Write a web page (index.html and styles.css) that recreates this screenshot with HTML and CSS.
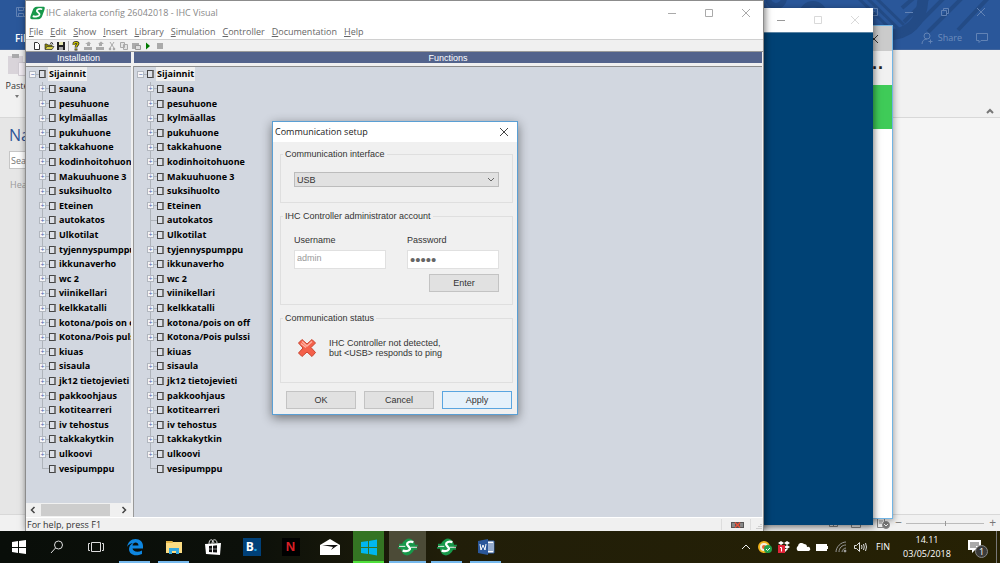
FILE: index.html
```html
<!DOCTYPE html>
<html lang="en">
<head>
<meta charset="utf-8">
<title>IHC alakerta config 26042018 - IHC Visual</title>
<link rel="stylesheet" href="styles.css">
</head>
<body>
<svg class="defs" aria-hidden="true">
  <symbol id="min" viewBox="0 0 10 10"><path d="M1 5.5h8"/></symbol>
  <symbol id="max" viewBox="0 0 10 10"><path d="M1.5 1.5h7v7h-7z"/></symbol>
  <symbol id="close" viewBox="0 0 10 10"><path d="M1 1l8 8M9 1l-8 8"/></symbol>
  <symbol id="restore" viewBox="0 0 10 10"><path d="M1.500 3.500h5v5h-5zM3.500 3.500v-2h5v5h-2"/></symbol>
  <symbol id="schneider" viewBox="0 0 22 20">
    <path d="M10 1h10c2 0 2 2 1 5l-3 8c-1 3-3 5-6 5H3c-3 0-3-2-2-5l3-8c1-3 3-5 6-5z" fill="#17984a"/>
    <path d="M18 4.500c-4-1-8 0-8 2.500 0 2 5 3 4 5.500-1 2.500-6 3.500-10 2" fill="none" stroke="#fff" stroke-width="2.600"/>
  </symbol>
  <symbol id="schneider-round" viewBox="0 0 22 20">
    <ellipse cx="11" cy="10" rx="7.500" ry="9.500" transform="rotate(20 11 10)" fill="#17984a"/>
    <path d="M1 7.500h6M0 11h7M15 8.500h7M15 12h6" stroke="#17984a" stroke-width="2"/>
    <path d="M17 4.500c-4-1-7 0-7 2.500 0 2 4 3 3 5.500-1 2-4 2.500-8 1.500" fill="none" stroke="#fff" stroke-width="2.600"/>
    <path d="M1 9.300h7M14 10.300h7" stroke="#fff" stroke-width="1"/>
  </symbol>
</svg>

<div class="desktop">
  <main class="workspace">

    <section class="word" aria-label="Word">
      <header class="word-head">
        <svg class="word-art" viewBox="0 0 300 49" aria-hidden="true">
          <circle cx="76" cy="-2" r="8" stroke-width="6"/>
          <circle cx="113" cy="15" r="11" stroke-width="6"/>
          <path d="M223-4c0 26-14 40-40 39" stroke-width="11"/>
          <path d="M156-4l44 42M165-4l38 37M174-4l30 29" stroke-width="3"/>
          <path d="M216-4l-14 12M230-4l-26 26M246-4l-36 36M264-4l-36 36M290-4l-32 34" stroke-width="4"/>
        </svg>
        <svg class="save" viewBox="0 0 10 10" aria-hidden="true"><path d="M.5.5h8l1 1v8h-9zM2.500.5v3h5v-3M2.500 9.500v-3h5v3"/></svg>
        <a class="file-tab" href="#">File</a>
        <div class="word-right">
          <div class="word-win">
            <button aria-label="Ribbon options"><svg viewBox="0 0 10 10"><path d="M.5 1.500h9v7h-9zM5 7V4M3.500 5L5 3.500 6.500 5"/></svg></button>
            <button aria-label="Minimize"><svg><use href="#min"/></svg></button>
            <button aria-label="Restore"><svg><use href="#restore"/></svg></button>
            <button aria-label="Close"><svg><use href="#close"/></svg></button>
          </div>
          <div class="word-share">
            <button class="share"><svg viewBox="0 0 12 12"><circle cx="6" cy="4" r="3"/><path d="M1 12c0-3 2-5 5-5M7.500 9.500h4M9.500 7.500v4"/></svg>Share</button>
            <button aria-label="Comments"><svg viewBox="0 0 12 12"><path d="M.5 1.500h11v7H5l-2 2v-2H.5z"/></svg></button>
          </div>
        </div>
      </header>
      <div class="ribbon">
        <button class="paste"><svg viewBox="0 0 20 24"><path fill="#d9d4da" d="M1 3h15v18H1z"/><path fill="#a9a9ab" d="M5 1h7v4H5z"/><path fill="#f4eff5" stroke="#d0cbd2" d="M11.500 9.500h9v13h-9z"/></svg>Paste<svg class="drop" viewBox="0 0 6 4"><path fill="#777" d="M1 0h4L3 3z"/></svg></button>
        <button class="collapse" aria-label="Collapse the ribbon"><svg viewBox="0 0 10 10"><path d="M2 7l3-3 3 3"/></svg></button>
      </div>
      <div class="word-body">
        <aside class="nav">
          <h2>Navigation</h2>
          <input type="text" aria-label="Search document" placeholder="Search document">
          <p>Headings</p>
        </aside>
      </div>
      <footer class="word-status">
        <svg class="views" viewBox="0 0 62 12"><path d="M1.500 2.500h8v7h-8zM5.500 2v8M23.500 1.500h9v9h-9zM25 4h6M25 6h6M49.500 1.500h7v9h-7zM51 4h4M51 6h3"/><circle cx="58" cy="8" r="3.500" fill="#777"/><path d="M56 7l2 2 2-2" stroke="#eee"/></svg>
        <span class="zoom-sign">−</span>
        <input type="range" aria-label="Zoom" value="50">
        <span class="zoom-sign">+</span>
      </footer>
    </section>

    <section class="green-window" aria-label="Background window">
      <div class="gw-title"><svg><use href="#close"/></svg></div>
      <div class="gw-dots">··</div>
      <div class="gw-band"></div>
    </section>

    <section class="blue-window" aria-label="Background application">
      <div class="bw-title">
        <svg class="strong"><use href="#min"/></svg>
        <svg><use href="#max"/></svg>
        <svg><use href="#close"/></svg>
      </div>
    </section>

    <section class="ihc" aria-label="IHC Visual">
      <header class="title">
        <svg class="logo"><use href="#schneider"/></svg>
        <h1>IHC alakerta config 26042018 - IHC Visual</h1>
        <div class="win-buttons">
          <button aria-label="Minimize"><svg><use href="#min"/></svg></button>
          <button aria-label="Maximize"><svg><use href="#max"/></svg></button>
          <button aria-label="Close"><svg><use href="#close"/></svg></button>
        </div>
      </header>
      <nav class="menu">
        <button><u>F</u>ile</button><button><u>E</u>dit</button><button><u>S</u>how</button><button><u>I</u>nsert</button><button><u>L</u>ibrary</button><button><u>S</u>imulation</button><button><u>C</u>ontroller</button><button><u>D</u>ocumentation</button><button><u>H</u>elp</button>
      </nav>
      <div class="toolbar">
        <button aria-label="New"><svg viewBox="0 0 10 10"><path d="M2.500 1.500h3l2 2v5h-5z" fill="#fff" stroke="#333"/></svg></button>
        <button aria-label="Open"><svg viewBox="0 0 10 10"><path d="M1 8V3h2l1 1h4v4z" fill="#8a8600" stroke="#333" stroke-width=".7"/><path d="M1 8.500l2-3h7l-2 3z" fill="#d8d34a" stroke="#333" stroke-width=".7"/><path d="M6 2.500l2-1 1 2" stroke="#333" fill="none"/></svg></button>
        <button aria-label="Save"><svg viewBox="0 0 10 10"><path d="M1 1h8v8H1z" fill="#222"/><path d="M3 1h4v3H3z" fill="#e6e6b0"/><path d="M3 6h4v3H3z" fill="#aaa"/></svg></button>
        <span class="sep"></span>
        <button aria-label="Help"><svg viewBox="0 0 10 10"><path d="M3 4V2.500C3 1 7 1 7 2.500S5 4 5 6.500M5 7.500v2" stroke="#222" stroke-width="2.800" fill="none"/><path d="M3 4V2.500C3 1 7 1 7 2.500S5 4 5 6M5 7.800v1" stroke="#c8c000" stroke-width="1.400" fill="none"/></svg></button>
        <button class="off" aria-label="Transfer"><svg viewBox="0 0 10 10"><path d="M1 6h8v3H1zM4 5V3H2l4-2.500L8 3H7v2z"/></svg></button>
        <button class="off" aria-label="Receive"><svg viewBox="0 0 10 10"><path d="M1 6h8v3H1zM4 5V3H3l3-2.500L9 3H7v2z"/></svg></button>
        <button class="off" aria-label="Cut"><svg viewBox="0 0 10 10"><path d="M3 1l4 6M7 1L3 7" stroke="#aaa"/><circle cx="3" cy="8" r="1.300"/><circle cx="7" cy="8" r="1.300"/></svg></button>
        <button class="off" aria-label="Copy"><svg viewBox="0 0 10 10"><path d="M1.500 1.500h4v5h-4zM4.500 3.500h4v5h-4z" fill="#e4e4e4" stroke="#aaa"/></svg></button>
        <button class="off" aria-label="Paste"><svg viewBox="0 0 10 10"><path d="M1 2h7v6H1z"/><path d="M4.500 4.500h5v4h-5z" fill="#ddd" stroke="#999"/></svg></button>
        <button aria-label="Run"><svg viewBox="0 0 10 10"><path d="M3 1.500v7L7 5z" fill="#007a00"/></svg></button>
        <button class="off" aria-label="Stop"><svg viewBox="0 0 10 10"><path d="M2 2h6v6H2z"/></svg></button>
      </div>
      <div class="panes">
        <section class="pane">
          <h2>Installation</h2>
          <div class="view">
            <ul class="tree">
              <li class="root"><button aria-label="Collapse">−</button><i></i><span>Sijainnit</span></li>
              <li><button aria-label="Expand">+</button><i></i><span>sauna</span></li>
              <li><button aria-label="Expand">+</button><i></i><span>pesuhuone</span></li>
              <li><button aria-label="Expand">+</button><i></i><span>kylmäallas</span></li>
              <li><button aria-label="Expand">+</button><i></i><span>pukuhuone</span></li>
              <li><button aria-label="Expand">+</button><i></i><span>takkahuone</span></li>
              <li><button aria-label="Expand">+</button><i></i><span>kodinhoitohuone</span></li>
              <li><button aria-label="Expand">+</button><i></i><span>Makuuhuone 3</span></li>
              <li><button aria-label="Expand">+</button><i></i><span>suksihuolto</span></li>
              <li><button aria-label="Expand">+</button><i></i><span>Eteinen</span></li>
              <li><button aria-label="Expand">+</button><i></i><span>autokatos</span></li>
              <li><button aria-label="Expand">+</button><i></i><span>Ulkotilat</span></li>
              <li><button aria-label="Expand">+</button><i></i><span>tyjennyspumppu</span></li>
              <li><button aria-label="Expand">+</button><i></i><span>ikkunaverho</span></li>
              <li><button aria-label="Expand">+</button><i></i><span>wc 2</span></li>
              <li><button aria-label="Expand">+</button><i></i><span>viinikellari</span></li>
              <li><button aria-label="Expand">+</button><i></i><span>kelkkatalli</span></li>
              <li><button aria-label="Expand">+</button><i></i><span>kotona/pois on off</span></li>
              <li><button aria-label="Expand">+</button><i></i><span>Kotona/Pois pulssi</span></li>
              <li><button aria-label="Expand">+</button><i></i><span>kiuas</span></li>
              <li><button aria-label="Expand">+</button><i></i><span>sisaula</span></li>
              <li><button aria-label="Expand">+</button><i></i><span>jk12 tietojevieti</span></li>
              <li><button aria-label="Expand">+</button><i></i><span>pakkoohjaus</span></li>
              <li><button aria-label="Expand">+</button><i></i><span>kotitearreri</span></li>
              <li><button aria-label="Expand">+</button><i></i><span>iv tehostus</span></li>
              <li><button aria-label="Expand">+</button><i></i><span>takkakytkin</span></li>
              <li><button aria-label="Expand">+</button><i></i><span>ulkoovi</span></li>
              <li class="leaf"><i></i><span>vesipumppu</span></li>
            </ul>
            <div class="scroll">
              <button aria-label="Scroll left"><svg viewBox="0 0 10 10"><path d="M6.500 2l-3 3 3 3"/></svg></button>
              <span class="thumb"></span>
              <button aria-label="Scroll right"><svg viewBox="0 0 10 10"><path d="M3.500 2l3 3-3 3"/></svg></button>
            </div>
          </div>
        </section>
        <section class="pane">
          <h2>Functions</h2>
          <div class="view">
            <ul class="tree">
              <li class="root"><button aria-label="Collapse">−</button><i></i><span>Sijainnit</span></li>
              <li><button aria-label="Expand">+</button><i></i><span>sauna</span></li>
              <li><button aria-label="Expand">+</button><i></i><span>pesuhuone</span></li>
              <li><button aria-label="Expand">+</button><i></i><span>kylmäallas</span></li>
              <li><button aria-label="Expand">+</button><i></i><span>pukuhuone</span></li>
              <li><button aria-label="Expand">+</button><i></i><span>takkahuone</span></li>
              <li><button aria-label="Expand">+</button><i></i><span>kodinhoitohuone</span></li>
              <li><button aria-label="Expand">+</button><i></i><span>Makuuhuone 3</span></li>
              <li><button aria-label="Expand">+</button><i></i><span>suksihuolto</span></li>
              <li><button aria-label="Expand">+</button><i></i><span>Eteinen</span></li>
              <li class="leaf"><i></i><span>autokatos</span></li>
              <li><button aria-label="Expand">+</button><i></i><span>Ulkotilat</span></li>
              <li><button aria-label="Expand">+</button><i></i><span>tyjennyspumppu</span></li>
              <li><button aria-label="Expand">+</button><i></i><span>ikkunaverho</span></li>
              <li><button aria-label="Expand">+</button><i></i><span>wc 2</span></li>
              <li><button aria-label="Expand">+</button><i></i><span>viinikellari</span></li>
              <li><button aria-label="Expand">+</button><i></i><span>kelkkatalli</span></li>
              <li><button aria-label="Expand">+</button><i></i><span>kotona/pois on off</span></li>
              <li><button aria-label="Expand">+</button><i></i><span>Kotona/Pois pulssi</span></li>
              <li class="leaf"><i></i><span>kiuas</span></li>
              <li><button aria-label="Expand">+</button><i></i><span>sisaula</span></li>
              <li><button aria-label="Expand">+</button><i></i><span>jk12 tietojevieti</span></li>
              <li><button aria-label="Expand">+</button><i></i><span>pakkoohjaus</span></li>
              <li><button aria-label="Expand">+</button><i></i><span>kotitearreri</span></li>
              <li><button aria-label="Expand">+</button><i></i><span>iv tehostus</span></li>
              <li><button aria-label="Expand">+</button><i></i><span>takkakytkin</span></li>
              <li><button aria-label="Expand">+</button><i></i><span>ulkoovi</span></li>
              <li class="leaf"><i></i><span>vesipumppu</span></li>
            </ul>
          </div>
        </section>
      </div>
      <footer class="status">
        <span>For help, press F1</span>
        <svg class="link-state" viewBox="0 0 42 13"><path d="M.5 1v11M29.500 1v11" stroke="#ddd"/><path d="M10 4h13v6H10z" fill="#555"/><path d="M11 6h3M19 6h3M11 8h3M19 8h3" stroke="#bbb"/><path d="M14 4.500l5 5M19 4.500l-5 5" stroke="#e8503a" stroke-width="1.500"/><path d="M40 6v1M38 8v1M40 8v1M36 10v1M38 10v1M40 10v1" stroke="#aaa"/></svg>
      </footer>
    </section>

    <section class="dialog" role="dialog" aria-labelledby="dlg">
      <header><h2 id="dlg">Communication setup</h2><button aria-label="Close"><svg><use href="#close"/></svg></button></header>
      <form onsubmit="return false">
        <fieldset class="interface">
          <legend>Communication interface</legend>
          <select aria-label="Communication interface"><option>USB</option></select>
        </fieldset>
        <fieldset class="account">
          <legend>IHC Controller administrator account</legend>
          <label for="user">Username</label>
          <label for="pass">Password</label>
          <input id="user" type="text" value="admin" readonly>
          <input id="pass" type="password" value="admin">
          <button type="button">Enter</button>
        </fieldset>
        <fieldset class="state">
          <legend>Communication status</legend>
          <svg viewBox="0 0 20 20" aria-hidden="true"><path d="M5 1.500L10 6l5-4.500L18.500 5 14 9.500l4.500 5L15 18.500 10 14l-5 4.500L1.500 15 6 10 1.500 5z" fill="#f4604a" stroke="#c9442f" stroke-linejoin="round"/><path d="M5 3.500l5 4.500 5-4.500M4 5.500l5 4" stroke="#ffb0a0" stroke-width="1.500" fill="none"/></svg>
          <p>IHC Controller not detected,<br>but &lt;USB&gt; responds to ping</p>
        </fieldset>
        <div class="actions">
          <button type="button">OK</button>
          <button type="button">Cancel</button>
          <button type="submit" class="primary">Apply</button>
        </div>
      </form>
    </section>
  </main>

  <footer class="taskbar">
    <button aria-label="Start"><svg viewBox="0 0 14 14" fill="#fff"><path d="M0 2l6-1v6H0zM7 1l7-1v7H7zM0 8h6v5l-6-1zM7 8h7v6l-7-1z"/></svg></button>
    <button aria-label="Search"><svg viewBox="0 0 14 14" fill="none" stroke="#ddd"><circle cx="8.500" cy="5" r="4"/><path d="M5.500 8L1 13"/></svg></button>
    <button aria-label="Task view"><svg class="wide" viewBox="0 0 18 14" fill="none" stroke="#ddd"><path d="M4.500 2.500h9v9h-9zM3 3.500H1.500v7H3M15 3.500h1.500v7H15"/></svg></button>
    <button class="open" aria-label="Edge"><svg class="wide" viewBox="0 0 18 18"><path d="M1 9c1-5 4-8 8.500-8C14 1 17 4 17 8v2.500H6.500c.3 3 5 4.500 9.500 2v3.500c-7 3-13 .5-13-5 0-3 2-5 4-6-3 .5-5 2-6 4zm5.500-1.500h6c0-4-5.500-4-6 0z" fill="#0e86e0"/></svg></button>
    <button class="open" aria-label="File Explorer"><svg class="wide" viewBox="0 0 18 18"><path d="M1 3h6l1 1h9v11H1z" fill="#fbdc83"/><path d="M1 3h6l1 2H1z" fill="#e3b54a"/><path d="M4 16v-6h10v6h-3v-3H7v3z" fill="#35a8df"/></svg></button>
    <button aria-label="Store"><svg class="wide" viewBox="0 0 18 18"><path d="M1 6l16-1-1 12-14-1z" fill="#fff"/><path d="M5 6c0-6 4-5 5-1M8 6c0-6 5-5 5-1" fill="none" stroke="#ddd"/><path d="M5 8l3-.3v3H5zM9 7.700l4-.4v3.400H9zM5 11.300h3v2.900l-3-.2zM9 11.300h4v3.300l-4-.3z" fill="#111"/></svg></button>
    <button aria-label="Booking"><span class="booking">B<b>.</b></span></button>
    <button aria-label="Netflix"><span class="netflix">N</span></button>
    <button aria-label="Mail"><svg class="large" viewBox="0 0 20 18"><path d="M0 7l10-6 10 6v10H0z" fill="#fff"/><path d="M2 7h16l-7 5 2-3z" fill="#111"/></svg></button>
    <button class="open lime" aria-label="Windows"><svg class="wide" viewBox="0 0 18 18" fill="#00b7f0"><path d="M1 4l7-1v6H1zM9 3l8-1.500V9H9zM1 10h7v6l-7-1zM9 10h8v7.500L9 16z"/></svg></button>
    <button class="open current" aria-label="IHC Visual"><svg class="large"><use href="#schneider-round"/></svg></button>
    <button class="open" aria-label="IHC"><svg class="large"><use href="#schneider-round"/></svg></button>
    <button class="open" aria-label="Word"><svg class="wide" viewBox="0 0 18 18"><path d="M9 3h8v12H9z" fill="#fff" stroke="#2b579a"/><path d="M11 6h5M11 8h5M11 10h5M11 12h5" stroke="#2b579a"/><path d="M1 3l10-2v16L1 15z" fill="#2b579a"/><path d="M3 6l1 6 2-5 2 5 1-6" fill="none" stroke="#fff"/></svg></button>
    <div class="tray">
      <svg viewBox="0 0 14 14" fill="none" stroke="#eee"><path d="M3 9l4-4 4 4"/></svg>
      <svg viewBox="0 0 14 14"><circle cx="6" cy="7" r="5" fill="#f4f0e0" stroke="#f0b31c" stroke-width="2"/><circle cx="6" cy="7" r="2" fill="#e8622c"/><circle cx="10" cy="9" r="4" fill="#22a04a"/><path d="M8 9l1.500 1.500L12 8" stroke="#fff" fill="none"/></svg>
      <svg viewBox="0 0 14 14"><path d="M4 1l3 2-3 2-3-2zM10 1l3 2-3 2-3-2zM10 5l3 2-3 2-3-2zM7 9h4l-3 3z" fill="#fff"/><path d="M1 5h7v8H1z" fill="#e02438"/><path d="M3 7.500h1.500V11.500" stroke="#fff" fill="none"/></svg>
      <svg viewBox="0 0 14 14"><path d="M2 11a3 3 0 010-5 3.500 3.500 0 016-2 3 3 0 013 3 2 2 0 012 4z" fill="#fff"/></svg>
      <svg viewBox="0 0 14 14"><path d="M1 4h11v2h1v3h-1v2H1z" fill="#fff"/></svg>
      <svg viewBox="0 0 14 14" fill="none" stroke="#999"><path d="M2 12C2 7 7 2 12 2M5 12c0-4 3-7 7-7M8 12c0-2 2-4 4-4"/><circle cx="11" cy="11" r="1" fill="#ddd"/></svg>
      <svg viewBox="0 0 14 14" fill="none" stroke="#ddd"><path d="M1.500 5.500h2l3-3v9l-3-3h-2zM8.500 5q1 2 0 4M10.500 4q1.500 3 0 6M12.500 3q2 4 0 8"/></svg>
      <span class="lang">FIN</span>
      <time datetime="2018-05-03T14:11">14.11<br>03/05/2018</time>
      <button class="notes" aria-label="1 notification"><svg viewBox="0 0 18 18"><path d="M0 2h13v10H7l-3 3v-3H0z" fill="#fff"/><path d="M2 5h9M2 7h9M2 9h6" stroke="#555"/></svg><span class="count">1</span></button>
    </div>
  </footer>
</div>
</body>
</html>
```

FILE: styles.css
```css
* { box-sizing: border-box; }
body {
  margin: 0;
  font: 9px/14px "Open Sans", "Noto Sans", sans-serif;
  color: #333;
}
h1, h2, p, ul { margin: 0; padding: 0; font: inherit; }
button, input, select { font: inherit; color: inherit; margin: 0; }
button { border: 0; padding: 0; background: none; }
svg { width: 10px; height: 10px; flex: none; display: block; overflow: visible; }
.defs { position: absolute; width: 0; height: 0; }

.desktop { height: 100vh; display: grid; grid-template-rows: minmax(0, 1fr) 32px; overflow: hidden; }
.workspace { position: relative; overflow: hidden; }

/* Word */
.word { height: 100%; display: flex; flex-direction: column; background: #f5f5f5; }
.word-head {
  height: 50px; flex: none; position: relative; overflow: hidden;
  background: #2a579a; border-bottom: 1px solid #41659d; color: #6d8dbd;
}
.word-head svg { fill: none; stroke: #6283b5; }
.word-head .word-art { position: absolute; top: 0; right: 0; width: 300px; height: 49px; stroke: #234b86; }
.save { margin: 7px 0 0 16px; }
.file-tab { display: block; margin: 14px 0 0 15px; color: #fff; font-size: 10px; text-decoration: none; font-weight: 600; }
.word-right { position: absolute; top: 0; right: 0; }
.word-win { display: flex; gap: 26px; padding: 7px 14px 0 0; justify-content: flex-end; }
.word-share { display: flex; gap: 14px; padding: 14px 12px 0 0; justify-content: flex-end; }
.word-share svg { width: 12px; height: 12px; }
.share { display: flex; gap: 5px; align-items: center; }
.ribbon { height: 68px; flex: none; display: flex; justify-content: space-between; background: #f1f1f1; border-bottom: 1px solid #d8d8d8; }
.paste { width: 34px; display: flex; flex-direction: column; align-items: center; padding-top: 3px; gap: 2px; align-self: flex-start; }
.paste svg { width: 20px; height: 24px; }
.paste .drop { width: 6px; height: 4px; }
.collapse { align-self: flex-end; padding: 0 5px 1px; }
.collapse svg { fill: none; stroke: #777; stroke-width: 2; }
.word-body { flex: 1; display: flex; }
.nav { width: 200px; padding: 7px 9px; background: #e6e6e6; }
.nav h2 { font-size: 16px; line-height: 20px; color: #2f5597; margin-bottom: 6px; }
.nav input { width: 100%; height: 18px; border: 1px solid #c6c6c6; padding: 0 1px; background: #fff; }
.nav p { margin: 9px 0 0 1px; color: #999; }
.word-status { height: 17px; flex: none; display: flex; align-items: center; justify-content: flex-end; gap: 4px; padding-right: 4px; background: #f1f1f1; border-top: 1px solid #d8d8d8; }
.views { width: 62px; height: 12px; fill: none; stroke: #888; }
.zoom-sign { color: #777; font-size: 12px; width: 8px; text-align: right; }
.word-status input { appearance: none; width: 78px; height: 1px; background: #bbb; }
.word-status input::-webkit-slider-thumb { appearance: none; width: 1px; height: 5px; background: #999; }

/* Windows behind the editor */
.green-window { position: absolute; right: 107px; top: 25px; bottom: 12px; width: 60px; background: #fff; border: 1px solid #71b4e4; box-shadow: 1px 2px 6px #0005; }
.gw-title { height: 25px; background: #cbcbcb; display: flex; align-items: center; justify-content: flex-end; padding-right: 13px; }
.gw-title svg { stroke: #333; }
.gw-dots { height: 34px; background: #f1f1f1; text-align: right; padding-right: 8px; font: bold 18px/34px "Liberation Sans", sans-serif; color: #222; }
.gw-band { height: 44px; background: #3fcb58; }
.blue-window { position: absolute; right: 127px; top: 8px; bottom: 6px; width: 130px; background: #004275; box-shadow: 1px 2px 7px #0008; }
.bw-title { height: 25px; background: #fff; border-bottom: 1px solid #5a83a3; display: flex; align-items: center; justify-content: flex-end; gap: 27px; padding-right: 13px; }
.bw-title svg { stroke: #d9d9d9; fill: none; }
.bw-title .strong { stroke: #999; }

/* Main editor */
.ihc {
  position: absolute; left: 25px; right: 236px; top: 0; bottom: 0;
  display: flex; flex-direction: column; background: #f0f0f0;
  border: 1px solid #8c8c8c; border-bottom: 0; box-shadow: 1px 0 7px #0008;
}
.title { height: 23px; flex: none; display: flex; align-items: center; gap: 1px; padding: 0 12px 0 4px; background: #fff; color: #888; }
.title h1 { flex: 1; white-space: nowrap; }
.logo { width: 15px; height: 14px; }
.win-buttons { display: flex; gap: 27px; }
.win-buttons svg { fill: none; stroke: #aaa; }
.menu { height: 16px; flex: none; display: flex; gap: 7px; padding: 0 3px; background: #fff; border-bottom: 1px solid #d0d0d0; color: #666; }
.menu button { display: block; height: 15px; }
.toolbar { height: 12px; flex: none; display: flex; align-items: center; gap: 2px; padding-left: 6px; border-bottom: 1px solid #9a9a9a; }
.toolbar .off { fill: #aaa; }
.sep { width: 1px; height: 10px; background: #aaa; }
.panes { flex: 1; min-height: 0; display: grid; grid-template-columns: 105px minmax(0, 1fr); gap: 3px; padding-right: 1px; }
.pane { display: flex; flex-direction: column; min-width: 0; min-height: 0; }
.pane h2 { height: 11px; flex: none; background: #53638c; color: #fff; text-align: center; font: 9px/13px "Liberation Sans", Arial, sans-serif; margin-bottom: 3px; }
.view { flex: 1; min-height: 0; display: flex; flex-direction: column; justify-content: space-between; background: #d2d7e0; border-top: 1px solid #8c8c8c; overflow: hidden; }
.pane + .pane .view { box-shadow: -1px 0 #999; }
.tree {
  height: 409px; flex: none; display: grid; grid-auto-rows: 1fr;
  list-style: none; color: #000; font-weight: 700; white-space: nowrap;
}
.tree li {
  display: flex; align-items: center; gap: 3px; padding-left: 13px; min-height: 0;
  background: linear-gradient(#aeb3ba, #aeb3ba) 16px 0 / 1px 100% no-repeat,
              linear-gradient(#aeb3ba, #aeb3ba) 16px 50% / 7px 1px no-repeat;
}
.tree .leaf { padding-left: 23px; }
.tree li:last-child { background-size: 1px 50%, 7px 1px; }
.tree .root { padding-left: 3px; background: linear-gradient(#aeb3ba, #aeb3ba) 10px 50% / 4px 1px no-repeat; }
.tree .root span { background: #f0f0f0; padding: 0 1px; margin-left: -1px; }
.tree button {
  width: 7px; height: 7px; flex: none; border: 1px solid #b2b7bf; background: #f6f6f8; color: #4a62a8;
  font: 7px/5px "Liberation Sans", Arial, sans-serif; overflow: hidden; text-align: center;
}
.tree i { width: 7px; height: 8px; flex: none; border: 1px solid #444; border-right: 2px solid #777; background: #dde0e7; }
.scroll { height: 14px; display: flex; align-items: center; gap: 3px; padding: 0 2px; background: #f0f0f0; }
.scroll svg { fill: none; stroke: #444; stroke-width: 1.5; }
.thumb { width: 69px; height: 12px; background: #cdcdcd; margin-right: auto; }
.status { height: 14px; flex: none; display: flex; justify-content: space-between; align-items: center; border-top: 1px solid #fff; padding-left: 1px; }
.link-state { width: 42px; height: 13px; }

/* Dialog */
.dialog {
  position: absolute; left: 272px; top: 121px; width: 246px;
  background: #f0f0f0; border: 1px solid #5a9fd4; box-shadow: 0 3px 10px #0007;
  font: 9px/10px "Liberation Sans", Arial, sans-serif;
}
.dialog header { height: 20px; display: flex; align-items: center; justify-content: space-between; padding: 0 8px 0 2px; background: #fff; font: 9px/14px "Open Sans", sans-serif; color: #222; }
.dialog header svg { stroke: #444; }
.dialog form { padding: 7px 4px 5px 7px; }
fieldset { margin: 0; padding: 0 13px; border: 1px solid #dfdfdf; min-width: 0; }
legend { padding: 0 2px; margin-left: -11px; }
.interface { height: 54px; padding-top: 13px; margin-bottom: 8px; }
select { appearance: none; display: block; width: 100%; height: 15px; padding: 0 2px; border: 1px solid #bcbcbc; border-radius: 0; background: #e1e1e1 url("data:image/svg+xml,%3Csvg xmlns='http://www.w3.org/2000/svg' width='8' height='6'%3E%3Cpath d='M1 1l3 3 3-3' fill='none' stroke='%23666'/%3E%3C/svg%3E") right 3px center no-repeat; }
.account { height: 94px; display: grid; grid-template-columns: 92px 92px; gap: 5px 21px; padding-top: 14px; align-content: start; margin-bottom: 8px; }
.account input { height: 19px; width: 100%; border: 1px solid #e0e0e0; background: #fff; padding: 0 2px 3px; color: #333; }
.account #user { color: #999; }
.account #pass { padding-bottom: 1px; font: 15px "Liberation Sans", sans-serif; color: #666; }
.account button { grid-column: 2; justify-self: end; }
.state { height: 70px; display: grid; grid-template-columns: 20px 1fr; gap: 12px; padding: 15px 16px 0; align-content: start; align-items: center; margin-bottom: 8px; }
.state legend { margin-left: -14px; }
.state svg { width: 20px; height: 20px; }
.actions { display: flex; justify-content: flex-end; gap: 8px; padding-right: 1px; }
.account button, .actions button { width: 70px; height: 18px; background: #e1e1e1; border: 1px solid #c3c3c3; }
.actions .primary { background: #e5f1fb; border-color: #5aa5e0; }

/* Taskbar */
.taskbar { display: flex; background: linear-gradient(90deg, #090e09, #0c100a 25%, #211e09 45%, #262104); color: #fff; }
.taskbar > button { width: 39px; display: grid; place-items: center; background-clip: padding-box; }
.taskbar > button:first-child { width: 37px; }
.taskbar svg { width: 14px; height: 14px; }
.taskbar .wide { width: 18px; height: 18px; }
.taskbar .large { width: 20px; height: 18px; }
.taskbar .open { border: solid transparent; border-width: 0 4px; background-image: linear-gradient(#76b9ed, #76b9ed); background-size: 100% 2px; background-position: bottom; background-repeat: no-repeat; }
.taskbar .lime { background-color: #347423; background-image: linear-gradient(#4fe03a, #4fe03a); }
.taskbar .current { background-color: #4c4b37; border-width: 0 1px; }
.booking, .netflix { width: 18px; height: 18px; font: bold 12px/18px "Open Sans", sans-serif; }
.booking { background: #004078; }
.booking b { color: #20a8e8; }
.netflix { background: #000; color: #d81f26; font: bold 13px/18px "Liberation Sans Narrow", "Liberation Sans", sans-serif; }
.tray { margin-left: auto; display: flex; align-items: center; gap: 5px; padding-right: 4px; border-right: 1px solid #777; margin-right: 3px; }
.lang { padding: 0 4px; }
.tray time { width: 56px; margin-right: 8px; text-align: center; }
.notes { display: flex; width: 24px; position: relative; }
.notes svg { width: 18px; height: 18px; }
.count { position: absolute; left: 7px; top: 7px; width: 13px; height: 13px; border-radius: 50%; background: #3b3b3b; border: 1px solid #888; line-height: 11px; }
```
